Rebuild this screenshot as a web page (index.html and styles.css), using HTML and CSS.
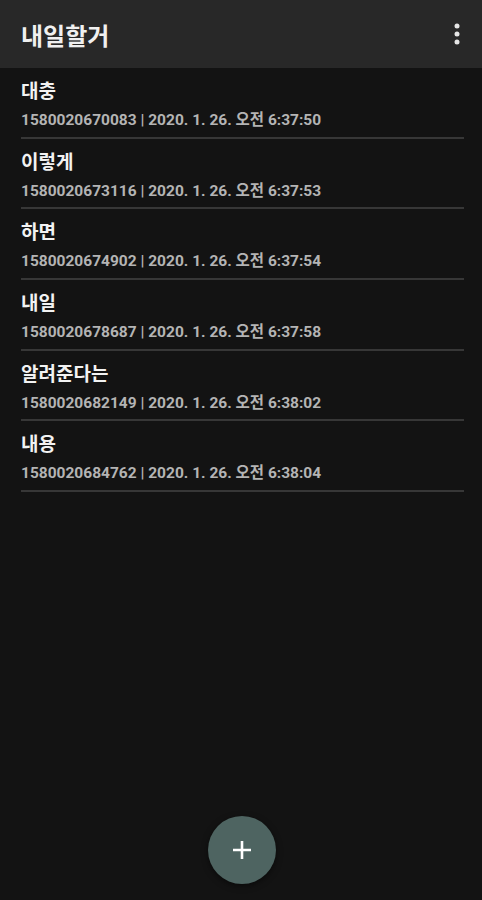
FILE: index.html
```html
<!DOCTYPE html>
<html lang="ko">
<head>
<meta charset="utf-8">
<title>내일할거</title>
<link rel="stylesheet" href="styles.css">
</head>
<body>
<div class="app">
  <header class="toolbar">
    <h1 class="title">내일할거</h1>
    <button class="more" aria-label="더보기">
      <svg width="6" height="22" viewBox="0 0 6 22"><circle cx="3" cy="3" r="2.5"/><circle cx="3" cy="11" r="2.5"/><circle cx="3" cy="19" r="2.5"/></svg>
    </button>
  </header>
  <ul class="list">
    <li class="item"><div class="item-title">대충</div><div class="item-sub">1580020670083 | 2020. 1. 26. 오전 6:37:50</div></li>
    <li class="item"><div class="item-title">이렇게</div><div class="item-sub">1580020673116 | 2020. 1. 26. 오전 6:37:53</div></li>
    <li class="item"><div class="item-title">하면</div><div class="item-sub">1580020674902 | 2020. 1. 26. 오전 6:37:54</div></li>
    <li class="item"><div class="item-title">내일</div><div class="item-sub">1580020678687 | 2020. 1. 26. 오전 6:37:58</div></li>
    <li class="item"><div class="item-title">알려준다는</div><div class="item-sub">1580020682149 | 2020. 1. 26. 오전 6:38:02</div></li>
    <li class="item"><div class="item-title">내용</div><div class="item-sub">1580020684762 | 2020. 1. 26. 오전 6:38:04</div></li>
  </ul>
  <button class="fab" aria-label="추가">
    <svg width="20" height="20" viewBox="0 0 20 20"><path d="M10 1v18M1 10h18" stroke="#fff" stroke-width="2.6"/></svg>
  </button>
</div>
</body>
</html>
```

FILE: styles.css
```css
* { box-sizing: border-box; }
html, body { margin: 0; padding: 0; }
body {
  background: #131313;
  font-family: Roboto, "Noto Sans CJK KR", sans-serif;
  color: #f2f2f2;
  width: 482px;
  height: 900px;
  overflow: hidden;
}
.app {
  position: relative;
  width: 482px;
  height: 900px;
  display: flex;
  flex-direction: column;
}
.toolbar {
  height: 68px;
  background: #282828;
  display: flex;
  align-items: center;
  justify-content: space-between;
  padding: 0 22px 0 21px;
  flex-shrink: 0;
}
.title {
  margin: 0;
  font-size: 24px;
  font-weight: 700;
  color: #f0f0f0;
}
.more {
  background: none;
  border: 0;
  padding: 0;
  display: flex;
  fill: #e6e6e6;
}
.list {
  list-style: none;
  margin: 0;
  padding: 0 18px 0 21px;
}
.item {
  height: 70.7px;
  display: flex;
  flex-direction: column;
  border-bottom: 2px solid #373737;
  padding-top: 11px;
}
.item-title {
  font-size: 19px;
  font-weight: 700;
  line-height: 26px;
  color: #f2f2f2;
}
.item-sub {
  font-size: 15.5px;
  font-weight: 700;
  line-height: 20px;
  color: #b4b4b4;
  margin-top: 5px;
}
.fab {
  position: absolute;
  left: 208px;
  top: 816px;
  width: 68px;
  height: 68px;
  border-radius: 50%;
  border: 0;
  padding: 0;
  background: #4e6461;
  display: flex;
  align-items: center;
  justify-content: center;
  box-shadow: 0 2px 6px rgba(0,0,0,0.5);
}
```
